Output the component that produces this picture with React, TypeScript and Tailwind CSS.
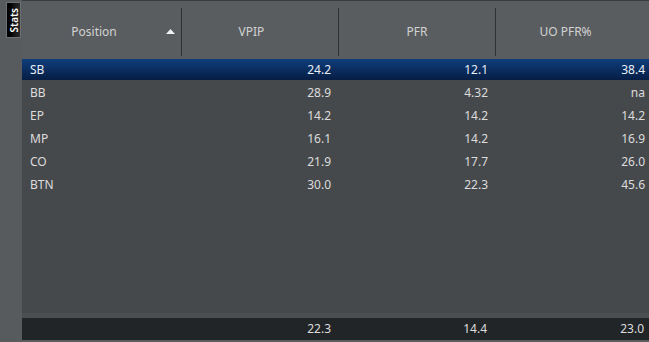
import React from "react";

const rows = [
  ["SB", "24.2", "12.1", "38.4"],
  ["BB", "28.9", "4.32", "na"],
  ["EP", "14.2", "14.2", "14.2"],
  ["MP", "16.1", "14.2", "16.9"],
  ["CO", "21.9", "17.7", "26.0"],
  ["BTN", "30.0", "22.3", "45.6"],
];

export default function App() {
  return (
    <div
      className="flex h-[342px] w-[649px] overflow-hidden bg-[#46494c] text-[12px] text-[#dcdcdc]"
      style={{ fontFamily: '"Noto Sans", "Open Sans", Arial, sans-serif' }}
    >
      {/* left strip */}
      <div className="flex w-[22px] shrink-0 flex-col bg-[#585b5d] pt-[2px] pl-[6px]">
        <div className="flex h-[36px] w-[15px] items-center justify-center border border-[#6e7173] bg-gradient-to-r from-[#000] via-[#111] to-[#2a2a2a]">
          <span
            className="rotate-180 text-[10px] font-semibold leading-none text-white"
            style={{ writingMode: "vertical-rl" }}
          >
            Stats
          </span>
        </div>
      </div>

      {/* main */}
      <div className="flex flex-1 flex-col">
        {/* header */}
        <div className="flex h-[59px] shrink-0 border-t border-[#3a3d40] bg-[#5a5d60] text-[#d2d2d2]">
          <div className="relative flex w-[159px] items-center justify-center pr-[15px] pt-[4px]">
            Position
            <svg className="absolute left-[144px] top-[28px]" width="9" height="5" viewBox="0 0 9 5">
              <polygon points="4.5,0 9,5 0,5" fill="#f0f0f0" />
            </svg>
          </div>
          <div className="mt-[7px] mb-[3px] w-px bg-[#2e3133]" />
          <div className="flex w-[156px] items-center justify-center pr-[17px] pt-[4px]">VPIP</div>
          <div className="mt-[7px] mb-[3px] w-px bg-[#2e3133]" />
          <div className="flex w-[156px] items-center justify-center pt-[4px]">PFR</div>
          <div className="mt-[7px] mb-[3px] w-px bg-[#2e3133]" />
          <div className="flex flex-1 items-center justify-center pr-[14px] pt-[4px]">UO PFR%</div>
        </div>

        {/* body */}
        <div className="flex flex-1 flex-col">
          {rows.map((r, i) => (
            <div
              key={r[0]}
              className={
                "mb-[2px] flex h-[21px] items-center " +
                (i === 0 ? "bg-gradient-to-b from-[#0f3f7c] to-[#061d44] text-[#e8eef8]" : "")
              }
            >
              <div className="w-[159px] pl-[8px]">{r[0]}</div>
              <div className="w-[157px] pr-[7px] text-right">{r[1]}</div>
              <div className="w-[157px] pr-[7px] text-right">{r[2]}</div>
              <div className="flex-1 pr-[4px] text-right">{r[3]}</div>
            </div>
          ))}
        </div>

        <div className="h-[5px] shrink-0 bg-[#4c4f52]" />

        {/* footer */}
        <div className="flex h-[22px] shrink-0 items-center bg-[#222528] text-[#dcdcdc]">
          <div className="w-[159px]" />
          <div className="w-[157px] pr-[7px] text-right">22.3</div>
          <div className="w-[157px] pr-[8px] text-right">14.4</div>
          <div className="flex-1 pr-[5px] text-right">23.0</div>
        </div>
        <div className="h-[2px] shrink-0 bg-[#5a5d5f]" />
      </div>
    </div>
  );
}
